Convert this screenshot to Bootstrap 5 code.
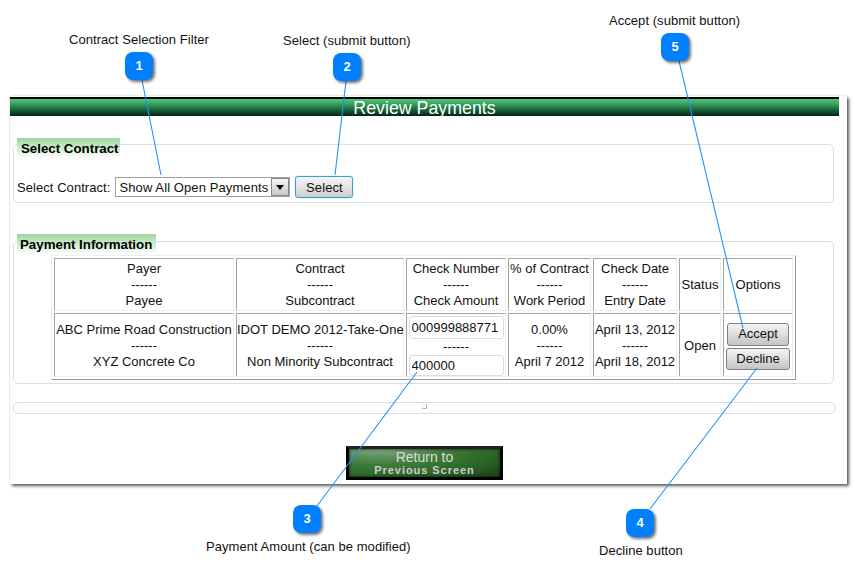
<!DOCTYPE html>
<html lang="en"><head><meta charset="utf-8"><title>Review Payments</title>
<link rel="stylesheet" href="https://cdn.jsdelivr.net/npm/bootstrap@5.3.0/dist/css/bootstrap.min.css">
<style>
html,body{background:#fff;margin:0;overflow:hidden}
body{font-family:"Liberation Sans",Arial,sans-serif;font-size:13px;color:#111;line-height:16px}
.stage{position:relative;width:855px;height:574px;padding:96px 0 0 10px}
.panel-main{width:837px;height:388px;background:#fff;box-shadow:2px 2px 3px rgba(0,0,0,.65),0 0 1px rgba(0,0,0,.25);padding-top:1px}
.hdr{width:829px;height:19px;border-top:2px solid #000;background:linear-gradient(#52c47c 0,#3ba862 25%,#1a6a3c 60%,#022414 100%);color:#fff;text-align:center;font-size:17.8px;line-height:18px}
.grp{margin:0 0 0 3px;width:821px;border:1px solid #d5deea;border-radius:5px;padding:0 3px;min-width:0}
.grp-a{margin-top:18px;height:69px}
.grp-b{margin-top:28px;height:153px}
.grp legend{position:relative;top:3px;float:none;width:auto;margin:3px 0 0 0;padding:0 4px;font-size:13.3px;font-weight:700;line-height:22px;height:20px;white-space:nowrap;background:linear-gradient(#9dd69d,#fff);color:#000}
.grp-a legend{width:103px;top:4px}
.grp-b legend{width:139px;padding:0 3px}
.sel-row{margin-top:22px}
.lbl-sel{margin-right:5px;letter-spacing:.06px;padding-top:1px}
.sel-wrap{position:relative;width:175px;height:20px}
.sel-native{width:175px;height:20px;appearance:none;border:1px solid #a0a0a0;border-right:2px solid #a0a0a0;outline:0;background:#fff;padding:1px 0 0 3px;font:13px/16px "Liberation Sans",Arial,sans-serif;letter-spacing:.1px;color:#111;border-radius:0}
.sel-arrow{position:absolute;right:1px;top:1px;width:18px;height:18px;background:linear-gradient(#f5f5f5,#c8c8c8);border:1px solid #8a8a8a;pointer-events:none}
.sel-arrow::after{content:"";position:absolute;left:4px;top:6px;border:4px solid transparent;border-top:5px solid #000;border-bottom:0}
.btn-sel{width:58px;height:22px;margin-left:5px;padding:1px 0 0;border:1px solid #3d9fd0;box-shadow:0 0 1px #3d9fd0;border-radius:3px;background:linear-gradient(#f6f6f6,#cfcfcf);font-size:13px;letter-spacing:.1px;line-height:18px;color:#111}
.btn-act{display:block;padding:0;margin:0 auto;border:1px solid #808080;border-radius:3px;background:linear-gradient(#f4f4f4,#c4c4c4);font-size:13px;line-height:16px;height:23px;color:#111}
.btn-act+.btn-act{margin-top:2px;height:22px}
.pay-tbl{border-collapse:separate;border-spacing:2px;border:1px solid;border-color:#eee #9a9a9a #9a9a9a #eee;margin:4px 0 0 34px;table-layout:fixed;width:745px;height:124px}
.pay-tbl td{border:1px solid;border-color:#a4a4a4 #eee #eee #a4a4a4;text-align:center;vertical-align:middle;padding:1px 0 0;white-space:nowrap;line-height:16px;color:#111}
.pay-tbl td.cell-inp{padding:1px 0 0}
.pay-tbl .row-b td{padding-top:2px}
.pay-input{display:block;width:95px;margin:0 auto;padding:0 2px;font-size:13px;line-height:16px;border:1px solid #ddd;border-radius:3px;color:#111;background:#fff;box-shadow:none;min-height:0}
.inp-a{height:23px}
.inp-b{height:21px}
.bar-thin{margin:18px 0 0 3px;width:823px;height:12px;border:1px solid #d5deea;border-radius:5px;position:relative}
.bar-grip{position:absolute;left:408px;top:1px;width:5px;height:5px;border:1px solid #bbb;border-top:0;border-left:0;box-shadow:inset 1px 1px 0 #eee}
.ret-wrap{margin-top:32px}
.ret-btn{display:block;margin:0 0 0 336px;width:157px;height:34px;border:3px solid #000;border-top-color:#222;background:radial-gradient(ellipse at 20% 0,#7fa87f 0,#3f7a3a 40%,#2c6a28 65%,#1c3f18 100%);color:#ddd;text-align:center;padding:0;box-shadow:inset 0 0 3px #111;border-radius:0}
.ret-1{display:block;font-size:14px;line-height:13px;padding-top:1px}
.ret-2{display:block;font-size:11px;line-height:12px;letter-spacing:.95px;font-weight:700;color:#ccc}
.cap{position:absolute;white-space:nowrap;font-size:13px;letter-spacing:.05px;line-height:14px;color:#111}
.pin{position:absolute;width:28px;height:28px;border-radius:8px;background:#007fff;color:#fff;font-size:13px;font-weight:700;line-height:28px;text-align:center;box-shadow:2px 2px 3px rgba(0,0,0,.55)}
.wires{position:absolute;left:0;top:0;pointer-events:none}
</style></head><body>
<div class="stage">
  <div class="panel-main">
    <div class="hdr">Review Payments</div>
    <fieldset class="grp grp-a">
      <legend>Select Contract</legend>
      <div class="d-flex align-items-center sel-row">
        <span class="lbl-sel">Select Contract:</span>
        <div class="sel-wrap"><select class="sel-native"><option>Show All Open Payments</option></select><span class="sel-arrow"></span></div>
        <button type="button" class="btn btn-sel">Select</button>
      </div>
    </fieldset>
    <fieldset class="grp grp-b">
      <legend>Payment Information</legend>
      <table class="pay-tbl">
        <colgroup><col style="width:180px"><col style="width:168px"><col style="width:100px"><col style="width:83px"><col style="width:84px"><col style="width:42px"><col></colgroup>
        <tr style="height:53px">
          <td>Payer<br>------<br>Payee</td><td>Contract<br>------<br>Subcontract</td><td>Check Number<br>------<br>Check Amount</td><td>% of Contract<br>------<br>Work Period</td><td>Check Date<br>------<br>Entry Date</td><td>Status</td><td>Options</td>
        </tr>
        <tr class="row-b">
          <td>ABC Prime Road Construction<br>------<br>XYZ Concrete Co</td>
          <td>IDOT DEMO 2012-Take-One<br>------<br>Non Minority Subcontract</td>
          <td class="cell-inp"><input class="form-control pay-input inp-a" value="000999888771"><div>------</div><input class="form-control pay-input inp-b" value="400000"></td>
          <td>0.00%<br>------<br>April 7 2012</td>
          <td>April 13, 2012<br>------<br>April 18, 2012</td>
          <td>Open</td>
          <td class="cell-inp"><button type="button" class="btn btn-act" style="width:62px">Accept</button><button type="button" class="btn btn-act" style="width:64px">Decline</button></td>
        </tr>
      </table>
    </fieldset>
    <div class="bar-thin"><span class="bar-grip"></span></div>
    <div class="ret-wrap"><button type="button" class="btn ret-btn"><span class="ret-1">Return to</span><span class="ret-2">Previous Screen</span></button></div>
  </div>
  <svg class="wires" width="855" height="574" fill="none" stroke="#2a8fff" stroke-width="1.1">
    <path d="M142 80 161 175M346 81 335 175M679 61 743 328M317 506 417 372M650 509 757 368"/>
  </svg>
  <span class="cap" style="left:69px;top:33px">Contract Selection Filter</span>
  <span class="cap" style="left:283px;top:34px">Select (submit button)</span>
  <span class="cap" style="left:609px;top:14px">Accept (submit button)</span>
  <span class="cap" style="left:206px;top:540px">Payment Amount (can be modified)</span>
  <span class="cap" style="left:599px;top:544px">Decline button</span>
  <span class="pin" style="left:125px;top:52px">1</span>
  <span class="pin" style="left:333px;top:53px">2</span>
  <span class="pin" style="left:293px;top:505px">3</span>
  <span class="pin" style="left:626px;top:509px">4</span>
  <span class="pin" style="left:661px;top:33px">5</span>
</div>
</body></html>
